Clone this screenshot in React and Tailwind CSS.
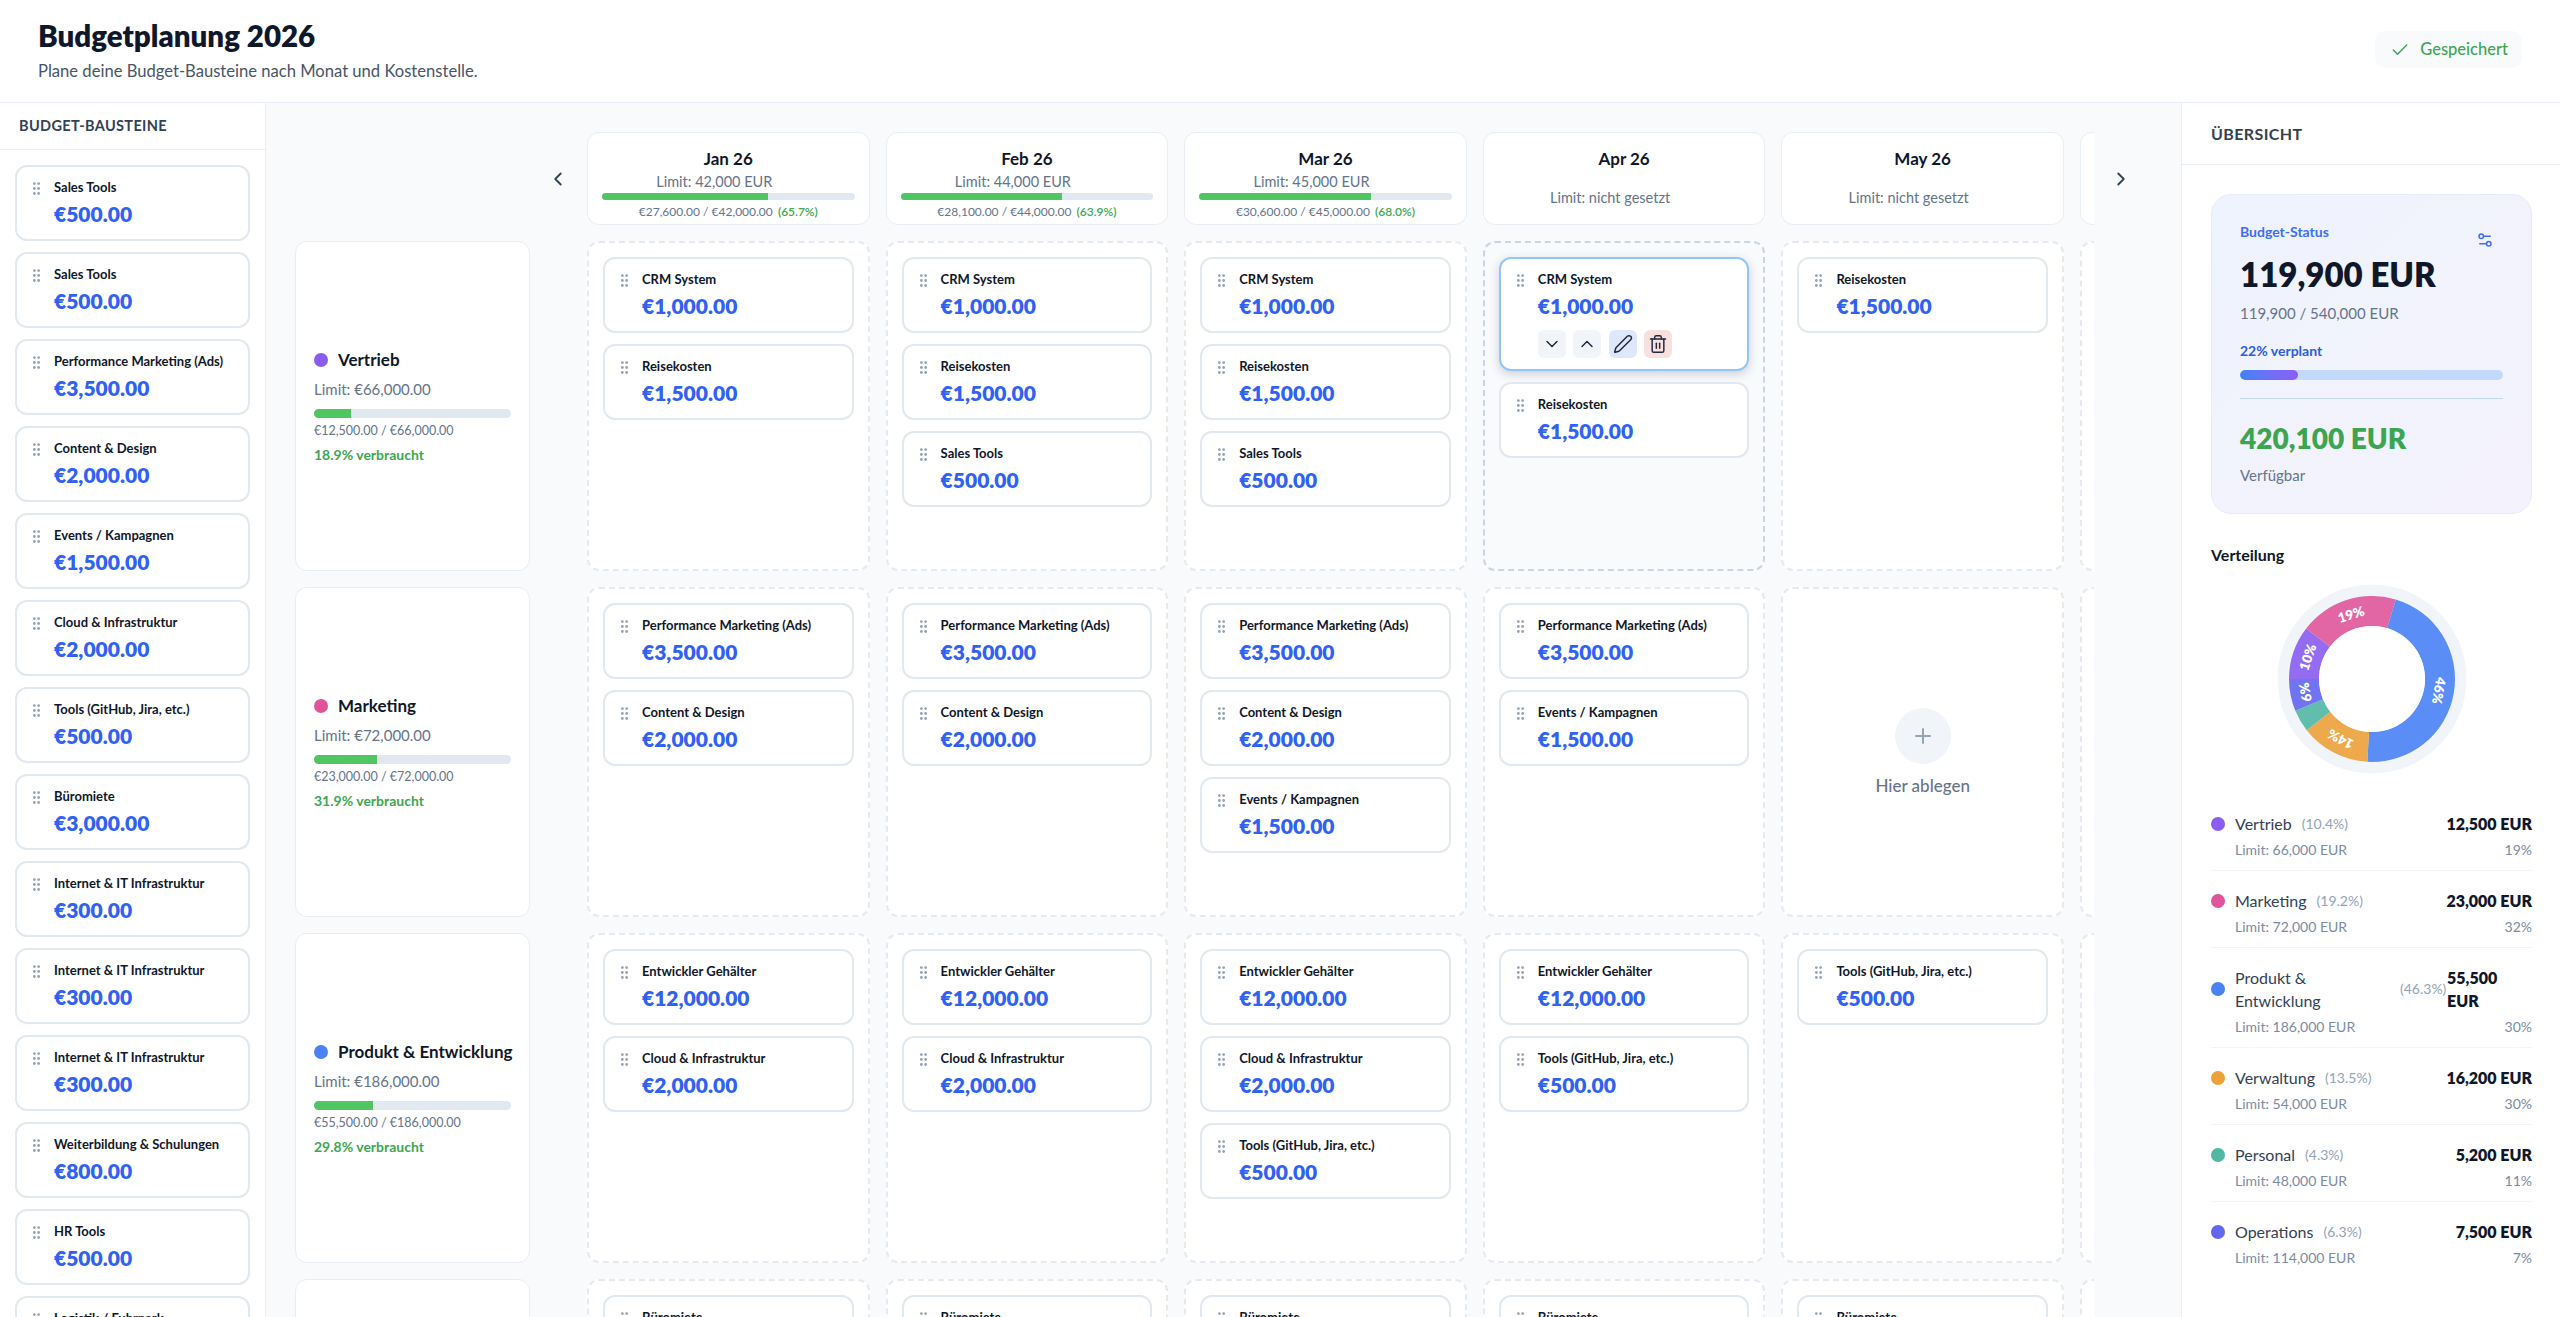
import { Check, ChevronDown, ChevronLeft, ChevronRight, ChevronUp, GripVertical, Pen, Plus, Settings2, Trash2 } from "lucide-react";

const CRM = { name: "CRM System", amount: "€1,000.00" };
const TRAVEL = { name: "Reisekosten", amount: "€1,500.00" };
const SALES = { name: "Sales Tools", amount: "€500.00" };
const ADS = { name: "Performance Marketing (Ads)", amount: "€3,500.00" };
const DESIGN = { name: "Content & Design", amount: "€2,000.00" };
const EVENTS = { name: "Events / Kampagnen", amount: "€1,500.00" };
const SALARY = { name: "Entwickler Gehälter", amount: "€12,000.00" };
const CLOUD = { name: "Cloud & Infrastruktur", amount: "€2,000.00" };
const TOOLS = { name: "Tools (GitHub, Jira, etc.)", amount: "€500.00" };
const RENT = { name: "Büromiete", amount: "€3,000.00" };
const NET = { name: "Internet & IT Infrastruktur", amount: "€300.00" };

const palette = [
  SALES,
  SALES,
  ADS,
  DESIGN,
  EVENTS,
  CLOUD,
  TOOLS,
  RENT,
  NET,
  NET,
  NET,
  { name: "Weiterbildung & Schulungen", amount: "€800.00" },
  { name: "HR Tools", amount: "€500.00" },
  { name: "Logistik / Fuhrpark", amount: "€700.00" },
];

const months = [
  { label: "Jan 26", limit: "42,000 EUR", used: "€27,600.00 / €42,000.00", pct: 65.7 },
  { label: "Feb 26", limit: "44,000 EUR", used: "€28,100.00 / €44,000.00", pct: 63.9 },
  { label: "Mar 26", limit: "45,000 EUR", used: "€30,600.00 / €45,000.00", pct: 68.0 },
  { label: "Apr 26" },
  { label: "May 26" },
  { label: "Jun 26" },
];

const rows = [
  {
    name: "Vertrieb",
    color: "#8a5df0",
    limit: "€66,000.00",
    used: "€12,500.00 / €66,000.00",
    pct: 18.9,
    cells: [[CRM, TRAVEL], [CRM, TRAVEL, SALES], [CRM, TRAVEL, SALES], [CRM, TRAVEL], [TRAVEL], []],
  },
  {
    name: "Marketing",
    color: "#e0559a",
    limit: "€72,000.00",
    used: "€23,000.00 / €72,000.00",
    pct: 31.9,
    cells: [[ADS, DESIGN], [ADS, DESIGN], [ADS, DESIGN, EVENTS], [ADS, EVENTS], [], []],
  },
  {
    name: "Produkt & Entwicklung",
    color: "#4a82f5",
    limit: "€186,000.00",
    used: "€55,500.00 / €186,000.00",
    pct: 29.8,
    cells: [[SALARY, CLOUD], [SALARY, CLOUD], [SALARY, CLOUD, TOOLS], [SALARY, TOOLS], [TOOLS], []],
  },
  {
    name: "Verwaltung",
    color: "#eda138",
    limit: "€54,000.00",
    used: "€16,200.00 / €54,000.00",
    pct: 30.0,
    cells: [[RENT], [RENT], [RENT], [RENT], [RENT], []],
  },
];

const legend = [
  { name: "Vertrieb", color: "#8a5df0", share: "(10.4%)", limit: "66,000 EUR", value: "12,500 EUR", pct: "19%" },
  { name: "Marketing", color: "#e0559a", share: "(19.2%)", limit: "72,000 EUR", value: "23,000 EUR", pct: "32%" },
  { name: "Produkt & Entwicklung", color: "#4a82f5", share: "(46.3%)", limit: "186,000 EUR", value: "55,500 EUR", pct: "30%", wrap: true },
  { name: "Verwaltung", color: "#eda138", share: "(13.5%)", limit: "54,000 EUR", value: "16,200 EUR", pct: "30%" },
  { name: "Personal", color: "#52b8a3", share: "(4.3%)", limit: "48,000 EUR", value: "5,200 EUR", pct: "11%" },
  { name: "Operations", color: "#6366f1", share: "(6.3%)", limit: "114,000 EUR", value: "7,500 EUR", pct: "7%" },
];

const slices = [
  { value: 12500, color: "#8a5df0", label: "10%" },
  { value: 23000, color: "#e0559a", label: "19%" },
  { value: 55500, color: "#4a82f5", label: "46%" },
  { value: 16200, color: "#eda138", label: "14%" },
  { value: 5200, color: "#52b8a3" },
  { value: 7500, color: "#6366f1", label: "6%" },
];

const polar = (r, deg) => {
  const a = (deg * Math.PI) / 180;
  return [95 + r * Math.sin(a), 95 - r * Math.cos(a)];
};

const Donut = () => {
  const total = slices.reduce((sum, s) => sum + s.value, 0);
  let start = 270;
  return (
    <svg width="190" height="190" viewBox="0 0 190 190">
      <circle cx="95" cy="95" r="94.5" fill="#f1f5fa" />
      {slices.map((s) => {
        const sweep = (s.value / total) * 360;
        const end = start + sweep;
        const mid = start + sweep / 2;
        const [x1, y1] = polar(83, start);
        const [x2, y2] = polar(83, end);
        const [x3, y3] = polar(53, end);
        const [x4, y4] = polar(53, start);
        const big = sweep > 180 ? 1 : 0;
        const [tx, ty] = polar(68, mid);
        start = end;
        return (
          <g key={s.color}>
            <path
              d={`M${x1} ${y1}A83 83 0 ${big} 1 ${x2} ${y2}L${x3} ${y3}A53 53 0 ${big} 0 ${x4} ${y4}Z`}
              fill={s.color}
              fillOpacity="0.9"
            />
            {s.label && (
              <text
                x={tx}
                y={ty}
                fill="#fff"
                fontSize="13.5"
                fontWeight="800"
                textAnchor="middle"
                dominantBaseline="central"
                transform={`rotate(${mid} ${tx} ${ty})`}>
                {s.label}
              </text>
            )}
          </g>
        );
      })}
      <circle cx="95" cy="95" r="53" fill="#fff" />
    </svg>
  );
};

const Card = ({ item, selected }) => (
  <div
    className={`flex gap-[9px] rounded-xl border-2 bg-white pt-[11px] pr-3 pl-[11px] ${
      selected ? "border-[#93c5fd] pb-[11px] shadow-[0_3px_10px_rgba(71,85,105,0.25)]" : "border-[#e2e8f0] pb-[11px]"
    }`}>
    <GripVertical size={17} className="mt-[2px] shrink-0 text-[#94a3b8]" />
    <div className="min-w-0">
      <div className="h-[18px] text-[13px] leading-[18px] font-bold whitespace-nowrap text-[#0f172a]">{item.name}</div>
      <div className="mt-[4px] h-7 text-[21px] leading-7 font-extrabold text-[#2f62f2]">{item.amount}</div>
      {selected && (
        <div className="mt-[10px] flex gap-[7.5px] text-[#1e293b]">
          <button className="flex size-7 items-center justify-center rounded-md bg-[#f1f5f9]">
            <ChevronDown size={20} strokeWidth={1.75} />
          </button>
          <button className="flex size-7 items-center justify-center rounded-md bg-[#f1f5f9]">
            <ChevronUp size={20} strokeWidth={1.75} />
          </button>
          <button className="flex size-7 items-center justify-center rounded-md bg-[#dfe7fd]">
            <Pen size={20} strokeWidth={1.75} />
          </button>
          <button className="flex size-7 items-center justify-center rounded-md bg-[#f8e0e0]">
            <Trash2 size={20} strokeWidth={1.75} />
          </button>
        </div>
      )}
    </div>
  </div>
);

const Cell = ({ items, active, selectFirst }) => (
  <div
    className={`flex h-[330px] w-[282.6px] shrink-0 flex-col gap-[11px] rounded-xl border-2 border-dashed p-[14px] ${
      active ? "border-[#cbd5e1] bg-[#f8fafc]" : "border-[#e5eaf1] bg-white"
    }`}>
    {items.map((item, i) => (
      <Card key={i} item={item} selected={selectFirst && i === 0} />
    ))}
    {items.length === 0 && (
      <div className="flex h-full flex-col items-center justify-center">
        <div className="flex size-14 items-center justify-center rounded-full bg-[#f1f5f9]">
          <Plus size={24} className="text-[#94a3b8]" />
        </div>
        <div className="mt-[11px] text-[17px] leading-[22px] font-medium text-[#64748b]">Hier ablegen</div>
      </div>
    )}
  </div>
);

const MonthHeader = ({ month }) => (
  <div className="h-[93px] w-[282.6px] shrink-0 rounded-xl border border-[#e8edf4] bg-white px-[14px] pt-[15px] text-center">
    <div className="text-[17px] leading-[22px] font-bold text-[#0f172a]">{month.label}</div>
    {month.limit ? (
      <>
        <div className="mt-[2px] pr-7 text-[14.5px] leading-5 text-[#64748b]">Limit: {month.limit}</div>
        <div className="mt-[1px] h-[7px] overflow-hidden rounded-full bg-[#e2e8f0]">
          <div className="h-full bg-[#4fc662]" style={{ width: `${month.pct}%` }} />
        </div>
        <div className="mt-[4px] text-xs leading-4 text-[#64748b]">
          {month.used} <span className="ml-0.5 font-semibold text-[#3da751]">({month.pct.toFixed(1)}%)</span>
        </div>
      </>
    ) : (
      <div className="mt-[18px] pr-7 text-[14.5px] leading-5 text-[#64748b]">Limit: nicht gesetzt</div>
    )}
  </div>
);

const RowLabel = ({ row }) => (
  <div className="flex h-[330px] w-[235px] shrink-0 flex-col justify-center rounded-xl border border-[#e8edf4] bg-white px-[18px]">
    <div className="flex items-center gap-2.5">
      <span className="size-3.5 shrink-0 rounded-full" style={{ backgroundColor: row.color }} />
      <span className="text-[17px] leading-6 font-bold whitespace-nowrap text-[#0f172a]">{row.name}</span>
    </div>
    <div className="mt-[7px] text-[15px] leading-5 text-[#64748b]">Limit: {row.limit}</div>
    <div className="mt-[10px] h-[9px] overflow-hidden rounded-full bg-[#e2e8f0]">
      <div className="h-full bg-[#4fc662]" style={{ width: `${row.pct}%` }} />
    </div>
    <div className="mt-[5px] text-[12.5px] leading-4 text-[#64748b]">{row.used}</div>
    <div className="mt-[6px] text-sm leading-5 font-bold text-[#3da751]">{row.pct}% verbraucht</div>
  </div>
);

const LegendRow = ({ item, last }) => (
  <div className={`pt-[18px] pb-[10px] ${last ? "" : "border-b border-[#f1f5f9]"}`}>
    <div className="flex items-center justify-between">
      <div className="flex min-w-0 items-center gap-2.5">
        <span className="size-3.5 shrink-0 rounded-full" style={{ backgroundColor: item.color }} />
        <span className={`text-base leading-[23px] text-[#334155] ${item.wrap ? "w-[155px]" : "whitespace-nowrap"}`}>
          {item.wrap ? (
            <>
              Produkt &amp;
              <br />
              Entwicklung
            </>
          ) : (
            item.name
          )}
        </span>
        <span className="text-sm whitespace-nowrap text-[#94a3b8]">{item.share}</span>
      </div>
      <span className={`text-base leading-[23px] font-extrabold text-[#0f172a] ${item.wrap ? "w-[85px]" : "whitespace-nowrap"}`}>
        {item.value}
      </span>
    </div>
    <div className="mt-[5px] flex justify-between pl-6 text-sm leading-5 text-[#7b8ba3]">
      <span>Limit: {item.limit}</span>
      <span>{item.pct}</span>
    </div>
  </div>
);

const App = () => {
  return (
    <div className="flex h-screen flex-col overflow-hidden bg-white font-[Lato,sans-serif]">
      <header className="flex h-[103px] shrink-0 items-start justify-between border-b border-[#e8edf4] pt-[18px] pr-[38px] pl-[38px]">
        <div>
          <h1 className="text-[29.5px] leading-9 font-extrabold text-[#0f172a]">Budgetplanung 2026</h1>
          <p className="mt-[5px] text-[16.6px] leading-6 text-[#475569]">Plane deine Budget-Bausteine nach Monat und Kostenstelle.</p>
        </div>
        <div className="mt-[13px] flex h-[37px] items-center gap-[10px] rounded-[10px] bg-[#f8fafc] pr-[14px] pl-[15px] text-[16.5px] font-medium text-[#3da751]">
          <Check size={20} strokeWidth={1.75} />
          Gespeichert
        </div>
      </header>

      <div className="flex min-h-0 flex-1">
        <aside className="flex w-[266px] shrink-0 flex-col overflow-hidden border-r border-[#e8edf4]">
          <div className="flex h-[47px] shrink-0 items-center border-b border-[#e8edf4] pl-[19px] text-[14.5px] font-bold tracking-wide text-[#334155]">
            BUDGET-BAUSTEINE
          </div>
          <div className="flex flex-col gap-[11px] px-[15px] pt-[15px]">
            {palette.map((item, i) => (
              <Card key={i} item={item} />
            ))}
          </div>
        </aside>

        <main className="min-w-0 flex-1 overflow-hidden bg-[#f8fafc] pt-[29px] pl-[29px]">
          <div className="flex h-[93px]">
            <div className="w-[235px] shrink-0" />
            <div className="flex w-[57px] shrink-0 items-center justify-center pr-[2px] text-[#334155]">
              <ChevronLeft size={22} />
            </div>
            <div className="flex w-[1507px] shrink-0 gap-4 overflow-hidden">
              {months.map((m) => (
                <MonthHeader key={m.label} month={m} />
              ))}
            </div>
            <div className="flex w-[54px] shrink-0 items-center justify-center text-[#334155]">
              <ChevronRight size={22} />
            </div>
          </div>
          {rows.map((row, r) => (
            <div key={row.name} className="mt-4 flex h-[330px]">
              <RowLabel row={row} />
              <div className="ml-[57px] flex w-[1507px] shrink-0 gap-4 overflow-hidden">
                {row.cells.map((items, c) => (
                  <Cell key={c} items={items} active={r === 0 && c === 3} selectFirst={r === 0 && c === 3} />
                ))}
              </div>
            </div>
          ))}
        </main>

        <aside className="w-[379px] shrink-0 overflow-hidden border-l border-[#e8edf4] bg-white">
          <div className="flex h-[62px] items-center border-b border-[#e8edf4] pl-[29px] text-base font-bold tracking-wide text-[#334155]">
            ÜBERSICHT
          </div>
          <div className="pt-[29px] pr-[28px] pl-[29px]">
            <div className="relative h-[320px] rounded-[20px] border border-[#e6ecfa] bg-gradient-to-br from-[#eef3fd] to-[#f4f2fc] px-[28px] pt-[27px]">
              <Settings2 size={18} className="absolute top-[36px] right-[37px] text-[#3f6ef5]" />
              <div className="text-sm leading-5 font-bold text-[#3f6ef5]">Budget-Status</div>
              <div className="mt-[10px] text-[33px] leading-[44px] font-extrabold text-[#0f172a]">119,900 EUR</div>
              <div className="mt-[7px] text-[15px] leading-5 text-[#64748b]">119,900 / 540,000 EUR</div>
              <div className="mt-[18px] text-sm leading-5 font-bold text-[#2d5be6]">22% verplant</div>
              <div className="mt-[9px] h-[10px] overflow-hidden rounded-full bg-[#c3d9fc]">
                <div className="h-full w-[22%] rounded-full bg-gradient-to-r from-[#3b82f6] to-[#8b5cf6]" />
              </div>
              <div className="mt-[18px] border-t border-[#c3d9fc]" />
              <div className="mt-[21px] text-[28px] leading-9 font-extrabold text-[#3ca550]">420,100 EUR</div>
              <div className="mt-[9px] text-[15px] leading-5 text-[#64748b]">Verfügbar</div>
            </div>
            <div className="mt-[29px] text-base leading-6 font-bold text-[#0f172a]">Verteilung</div>
            <div className="mt-[17px] flex justify-center">
              <Donut />
            </div>
            <div className="mt-[20px]">
              {legend.map((item, i) => (
                <LegendRow key={item.name} item={item} last={i === legend.length - 1} />
              ))}
            </div>
          </div>
        </aside>
      </div>
    </div>
  );
};

export default App;
